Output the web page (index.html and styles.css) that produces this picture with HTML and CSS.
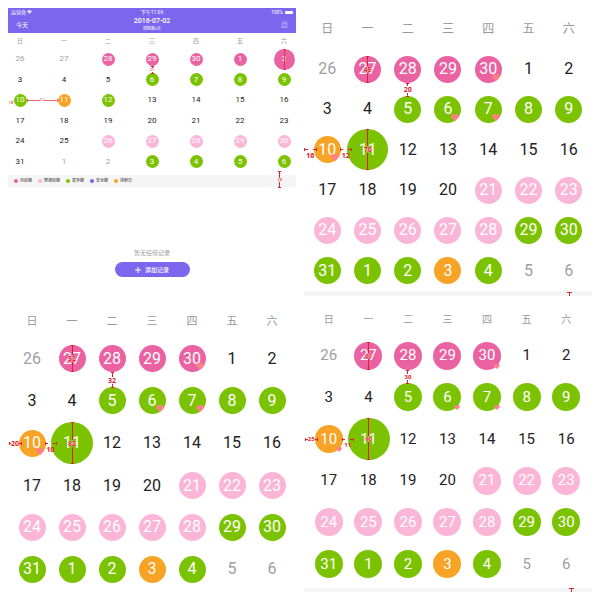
FILE: index.html
```html
<!DOCTYPE html>
<html lang="zh-CN">
<head>
<meta charset="utf-8">
<meta name="viewport" content="width=device-width, initial-scale=1">
<title>日历</title>
<link rel="stylesheet" href="styles.css">
</head>
<body>
<svg class="defs" aria-hidden="true">
  <symbol id="heart" viewBox="0 0 16 14"><path d="M8 14 2 8C-1 5 0 1 4 0c2 0 3 1 4 2 1-1 2-2 4-2 4 1 5 5 2 8z"/></symbol>
</svg>
<main class="board">

<section class="screen tablet">
  <header class="bar">
    <div class="status">
      <span>运营商 <svg class="wifi" viewBox="0 0 12 9"><path d="M0 3q6-6 12 0l-2 2q-4-4-8 0zM3 6q3-3 6 0L6 9z"/></svg></span>
      <span>下午11:09</span>
      <span class="power">100% <i class="battery"></i></span>
    </div>
    <nav class="nav">
      <a class="today" href="#">今天</a>
      <div class="title"><h1>2016-07-02</h1><p>周期第5天</p></div>
      <button class="menu" type="button" aria-label="日历"><svg viewBox="0 0 14 14"><path d="M1 2h12M2 5h10v7H2zM4 8h6M1 13h12"/></svg></button>
    </nav>
  </header>
  <table class="cal">
    <thead><tr><th>日</th><th>一</th><th>二</th><th>三</th><th>四</th><th>五</th><th>六</th></tr></thead>
    <tbody>
      <tr><td><span class="day out">26</span></td><td><span class="day out">27</span></td><td><span class="day pink">28</span></td><td><span class="day pink">29<b class="gauge below">27</b></span></td><td><span class="day pink">30</span></td><td><span class="day pink">1</span></td><td><span class="day pink big">2<b class="gauge across through"></b></span></td></tr>
      <tr><td><span class="day">3</span></td><td><span class="day">4</span></td><td><span class="day">5</span></td><td><span class="day green">6</span></td><td><span class="day green">7</span></td><td><span class="day green">8</span></td><td><span class="day green">9</span></td></tr>
      <tr><td><span class="day green">10<b class="gauge side left"><span class="low">18</span></b><b class="gauge side right">63</b></span></td><td><span class="day orange">11</span></td><td><span class="day green">12</span></td><td><span class="day">13</span></td><td><span class="day">14</span></td><td><span class="day">15</span></td><td><span class="day">16</span></td></tr>
      <tr><td><span class="day">17</span></td><td><span class="day">18</span></td><td><span class="day">19</span></td><td><span class="day">20</span></td><td><span class="day">21</span></td><td><span class="day">22</span></td><td><span class="day">23</span></td></tr>
      <tr><td><span class="day">24</span></td><td><span class="day">25</span></td><td><span class="day light">26</span></td><td><span class="day light">27</span></td><td><span class="day light">28</span></td><td><span class="day light">29</span></td><td><span class="day light">30</span></td></tr>
      <tr><td><span class="day">31</span></td><td><span class="day out">1</span></td><td><span class="day out">2</span></td><td><span class="day green">3</span></td><td><span class="day green">4</span></td><td><span class="day green">5</span></td><td><span class="day green">6</span></td></tr>
    </tbody>
  </table>
  <div class="strip">
    <ul class="legend">
      <li><i class="dot pink"></i>月经期</li>
      <li><i class="dot light"></i>预测经期</li>
      <li><i class="dot green"></i>易孕期</li>
      <li><i class="dot violet"></i>安全期</li>
      <li><i class="dot orange"></i>排卵日</li>
    </ul>
    <b class="gauge tall">28</b>
  </div>
  <div class="empty">
    <p>暂无任何记录</p>
    <button class="add" type="button"><svg viewBox="0 0 6 6"><path d="M3 0v6M0 3h6"/></svg>添加记录</button>
  </div>
</section>

<section class="screen phone-a">
  <table class="cal">
    <thead><tr><th>日</th><th>一</th><th>二</th><th>三</th><th>四</th><th>五</th><th>六</th></tr></thead>
    <tbody>
      <tr><td><span class="day out">26</span></td><td><span class="day pink">27<b class="gauge across">45</b></span></td><td><span class="day pink">28<b class="gauge below">20</b></span></td><td><span class="day pink">29</span></td><td><span class="day pink">30<svg class="heart"><use href="#heart"/></svg></span></td><td><span class="day">1</span></td><td><span class="day">2</span></td></tr>
      <tr><td><span class="day">3</span></td><td><span class="day">4</span></td><td><span class="day green">5</span></td><td><span class="day green">6<svg class="heart"><use href="#heart"/></svg></span></td><td><span class="day green">7<svg class="heart"><use href="#heart"/></svg></span></td><td><span class="day green">8</span></td><td><span class="day green">9</span></td></tr>
      <tr><td><span class="day orange">10<svg class="heart"><use href="#heart"/></svg><b class="gauge side left"><span class="low">16</span></b><b class="gauge side right"><span class="low">12</span></b></span></td><td><span class="day green big">11<b class="gauge across">70</b></span></td><td><span class="day">12</span></td><td><span class="day">13</span></td><td><span class="day">14</span></td><td><span class="day">15</span></td><td><span class="day">16</span></td></tr>
      <tr><td><span class="day">17</span></td><td><span class="day">18</span></td><td><span class="day">19</span></td><td><span class="day">20</span></td><td><span class="day light">21</span></td><td><span class="day light">22</span></td><td><span class="day light">23</span></td></tr>
      <tr><td><span class="day light">24</span></td><td><span class="day light">25</span></td><td><span class="day light">26</span></td><td><span class="day light">27</span></td><td><span class="day light">28</span></td><td><span class="day green">29</span></td><td><span class="day green">30</span></td></tr>
      <tr><td><span class="day green">31</span></td><td><span class="day green">1</span></td><td><span class="day green">2</span></td><td><span class="day orange">3</span></td><td><span class="day green">4</span></td><td><span class="day out">5</span></td><td><span class="day out">6</span></td></tr>
    </tbody>
  </table>
  <div class="rule"><i class="tick"></i></div>
</section>

<section class="screen phone-b">
  <table class="cal">
    <thead><tr><th>日</th><th>一</th><th>二</th><th>三</th><th>四</th><th>五</th><th>六</th></tr></thead>
    <tbody>
      <tr><td><span class="day out">26</span></td><td><span class="day pink">27<b class="gauge across">52</b></span></td><td><span class="day pink">28<b class="gauge below">32</b></span></td><td><span class="day pink">29</span></td><td><span class="day pink">30<svg class="heart"><use href="#heart"/></svg></span></td><td><span class="day">1</span></td><td><span class="day">2</span></td></tr>
      <tr><td><span class="day">3</span></td><td><span class="day">4</span></td><td><span class="day green">5</span></td><td><span class="day green">6<svg class="heart"><use href="#heart"/></svg></span></td><td><span class="day green">7<svg class="heart"><use href="#heart"/></svg></span></td><td><span class="day green">8</span></td><td><span class="day green">9</span></td></tr>
      <tr><td><span class="day orange">10<svg class="heart"><use href="#heart"/></svg><b class="gauge side left">20</b><b class="gauge side right"><span class="low">10</span></b></span></td><td><span class="day green big">11<b class="gauge across">82</b></span></td><td><span class="day">12</span></td><td><span class="day">13</span></td><td><span class="day">14</span></td><td><span class="day">15</span></td><td><span class="day">16</span></td></tr>
      <tr><td><span class="day">17</span></td><td><span class="day">18</span></td><td><span class="day">19</span></td><td><span class="day">20</span></td><td><span class="day light">21</span></td><td><span class="day light">22</span></td><td><span class="day light">23</span></td></tr>
      <tr><td><span class="day light">24</span></td><td><span class="day light">25</span></td><td><span class="day light">26</span></td><td><span class="day light">27</span></td><td><span class="day light">28</span></td><td><span class="day green">29</span></td><td><span class="day green">30</span></td></tr>
      <tr><td><span class="day green">31</span></td><td><span class="day green">1</span></td><td><span class="day green">2</span></td><td><span class="day orange">3</span></td><td><span class="day green">4</span></td><td><span class="day out">5</span></td><td><span class="day out">6</span></td></tr>
    </tbody>
  </table>
</section>

<section class="screen phone-c">
  <table class="cal">
    <thead><tr><th>日</th><th>一</th><th>二</th><th>三</th><th>四</th><th>五</th><th>六</th></tr></thead>
    <tbody>
      <tr><td><span class="day out">26</span></td><td><span class="day pink">27<b class="gauge across">60</b></span></td><td><span class="day pink">28<b class="gauge below">30</b></span></td><td><span class="day pink">29</span></td><td><span class="day pink">30<svg class="heart"><use href="#heart"/></svg></span></td><td><span class="day">1</span></td><td><span class="day">2</span></td></tr>
      <tr><td><span class="day">3</span></td><td><span class="day">4</span></td><td><span class="day green">5</span></td><td><span class="day green">6<svg class="heart"><use href="#heart"/></svg></span></td><td><span class="day green">7<svg class="heart"><use href="#heart"/></svg></span></td><td><span class="day green">8</span></td><td><span class="day green">9</span></td></tr>
      <tr><td><span class="day orange">10<svg class="heart"><use href="#heart"/></svg><b class="gauge side left">25</b><b class="gauge side right"><span class="low">11</span></b></span></td><td><span class="day green big">11<b class="gauge across">90</b></span></td><td><span class="day">12</span></td><td><span class="day">13</span></td><td><span class="day">14</span></td><td><span class="day">15</span></td><td><span class="day">16</span></td></tr>
      <tr><td><span class="day">17</span></td><td><span class="day">18</span></td><td><span class="day">19</span></td><td><span class="day">20</span></td><td><span class="day light">21</span></td><td><span class="day light">22</span></td><td><span class="day light">23</span></td></tr>
      <tr><td><span class="day light">24</span></td><td><span class="day light">25</span></td><td><span class="day light">26</span></td><td><span class="day light">27</span></td><td><span class="day light">28</span></td><td><span class="day green">29</span></td><td><span class="day green">30</span></td></tr>
      <tr><td><span class="day green">31</span></td><td><span class="day green">1</span></td><td><span class="day green">2</span></td><td><span class="day orange">3</span></td><td><span class="day green">4</span></td><td><span class="day out">5</span></td><td><span class="day out">6</span></td></tr>
    </tbody>
  </table>
  <div class="rule"><i class="tick"></i></div>
</section>

</main>
</body>
</html>
```
FILE: styles.css
```css
* { box-sizing: border-box; }
body {
  margin: 0;
  background: #fff;
  color: #222;
  font-family: Roboto, "Noto Sans CJK SC", sans-serif;
}
h1, p, ul { margin: 0; padding: 0; }
button { border: 0; padding: 0; font: inherit; color: inherit; background: none; }
.defs { position: absolute; width: 0; height: 0; }

.board {
  display: grid;
  grid-template-columns: 1fr 1fr;
  gap: 8px;
  padding: 8px;
}
.screen { min-width: 0; }

/* Calendar grid */
.cal { width: 100%; table-layout: fixed; border-collapse: collapse; }
.cal th, .cal td { padding: 0; text-align: center; vertical-align: middle; }
.cal th { font-weight: 400; color: #999; line-height: 1; }
.day {
  position: relative;
  display: flex;
  align-items: center;
  justify-content: center;
  width: 27px;
  height: 27px;
  margin: 0 auto;
  border-radius: 50%;
  font-size: 16px;
  line-height: 1;
}
.out { color: #a0a0a0; }
.pink, .light, .green, .orange { color: #fff; }
.pink { background: #ea62a1; }
.light { background: #fbb5d6; }
.green { background: #7bc300; }
.orange { background: #f7a325; }
.violet { background: #7b61ee; }
.heart {
  position: absolute;
  right: 2px;
  bottom: 2px;
  width: 8px;
  height: 7px;
  fill: #ff7f86;
}

/* Red dimension marks */
.gauge {
  position: absolute;
  z-index: 1;
  display: flex;
  flex-direction: column;
  align-items: center;
  justify-content: center;
  color: #e2202c;
  font: 700 7px/1 "Noto Sans", sans-serif;
}
.gauge::before, .gauge::after {
  content: "";
  flex: 1;
  width: 3px;
  background: linear-gradient(#e2202c, #e2202c) center / 1px 100% no-repeat;
}
.gauge::before { border-top: 1px solid #e2202c; }
.gauge::after { border-bottom: 1px solid #e2202c; }
.across {
  top: 0;
  bottom: 0;
  left: 0;
  right: 0;
  text-shadow: 0 0 1px #fff, 0 0 1px #fff;
}
.through { opacity: .7; }
.below { top: 100%; left: 0; right: 0; height: 14px; }
.side { flex-direction: row; top: 0; bottom: 0; }
.side::before, .side::after {
  width: auto;
  height: 3px;
  border: 0;
  background: linear-gradient(#e2202c, #e2202c) center / 100% 1px no-repeat;
}
.side::before { border-left: 1px solid #e2202c; }
.side::after { border-right: 1px solid #e2202c; }
.side.left { right: calc(100% - 3px); width: 13px; }
.side.right { left: calc(100% - 1px); width: 12px; }
.side .low { width: 5px; display: flex; justify-content: center; padding-top: 12px; }

.rule { position: relative; height: 5px; background: #f5f5f5; }
.tick {
  position: absolute;
  right: 20px;
  bottom: 0;
  width: 5px;
  height: 4px;
  border-top: 1px solid #e2202c;
  background: linear-gradient(#e2202c, #e2202c) center / 1px 100% no-repeat;
}

/* Tablet */
.bar { height: 25px; background: #7d66ee; color: #fff; }
.status {
  display: grid;
  grid-template-columns: 1fr auto 1fr;
  align-items: center;
  height: 8px;
  padding: 0 3px;
  font-size: 5px;
  line-height: 8px;
}
.status span { white-space: nowrap; }
.wifi { width: 5px; height: 4px; fill: #fff; }
.power { display: flex; align-items: center; justify-content: flex-end; gap: 2px; }
.battery { width: 8px; height: 3px; border-radius: 1px; background: #fff; }
.nav {
  display: grid;
  grid-template-columns: 1fr auto 1fr;
  align-items: center;
  height: 16px;
  padding: 0 8px;
}
.today { color: #fff; font-size: 6px; text-decoration: none; }
.title { text-align: center; }
.title h1 { font-size: 7px; font-weight: 500; line-height: 9px; }
.title p { font-size: 4px; line-height: 5px; }
.menu { justify-self: end; display: flex; }
.menu svg { width: 7px; height: 7px; fill: none; stroke: #d9d2ff; stroke-width: 1; }

.tablet .cal { width: calc(100% + 20px); height: 139px; margin: 0 -10px; }
.tablet thead tr { height: 16px; }
.tablet th { font-size: 6px; }
.tablet .day { width: 13px; height: 13px; font-size: 8px; }
.tablet .day.big { width: 21px; height: 21px; margin: -4px auto; }
.tablet .gauge { font-size: 4px; font-weight: 400; }
.tablet .below { height: 8px; }
.tablet .side.left { right: 100%; width: 5px; }
.tablet .side.left::before, .tablet .side.left::after { display: none; }
.tablet .side.right { left: 100%; width: 31px; opacity: .7; }
.tablet .low { padding-top: 6px; }

.strip {
  position: relative;
  margin-top: 3px;
  background: #f5f5f5;
}
.legend {
  display: flex;
  align-items: center;
  gap: 6px;
  height: 12px;
  padding: 0 6px;
  font-size: 4px;
  line-height: 1;
  list-style: none;
}
.legend li { display: flex; align-items: center; gap: 2px; }
.dot { width: 4px; height: 4px; border-radius: 50%; }
.tall { top: -4px; bottom: -1px; right: 14px; }

.empty {
  display: flex;
  flex-direction: column;
  align-items: center;
  gap: 5px;
  padding-top: 62px;
  font-size: 6px;
  line-height: 8px;
  color: #999;
}
.add {
  display: flex;
  align-items: center;
  justify-content: center;
  gap: 4px;
  width: 75px;
  height: 15px;
  border-radius: 8px;
  background: #7d66ee;
  color: #fff;
  font-weight: 500;
}
.add svg { width: 6px; height: 6px; stroke: #fff; stroke-width: 1; }

/* Phones */
.phone-a .cal { width: calc(100% - 6px); height: 283px; margin: 0 3px; }
.phone-a thead tr { height: 41px; }
.phone-a th { font-size: 12px; }
.phone-a .big { width: 41px; height: 41px; margin: -7px 0; }

.phone-b .cal { width: calc(100% - 8px); height: 286px; margin: 0 4px; }
.phone-b thead tr { height: 34px; }
.phone-b th { font-size: 11px; }
.phone-b .big { width: 42px; height: 42px; margin: -7px -1px; }
.phone-b .below { height: 16px; }

.phone-c { padding-top: 1px; }
.phone-c .cal { width: calc(100% - 11px); height: 280px; margin: 0 6px 3px 5px; }
.phone-c thead tr { height: 30px; }
.phone-c th { font-size: 10px; }
.phone-c .day { width: 28px; height: 28px; font-size: 15px; }
.phone-c .day.big { width: 42px; height: 42px; margin: -7px -1px; }
.phone-c .heart { right: 1px; bottom: 1px; width: 6px; height: 5px; }
.phone-c .gauge { font-size: 6px; }
.phone-c .rule { height: 4px; }
.phone-c .tick { right: 18px; }
```
